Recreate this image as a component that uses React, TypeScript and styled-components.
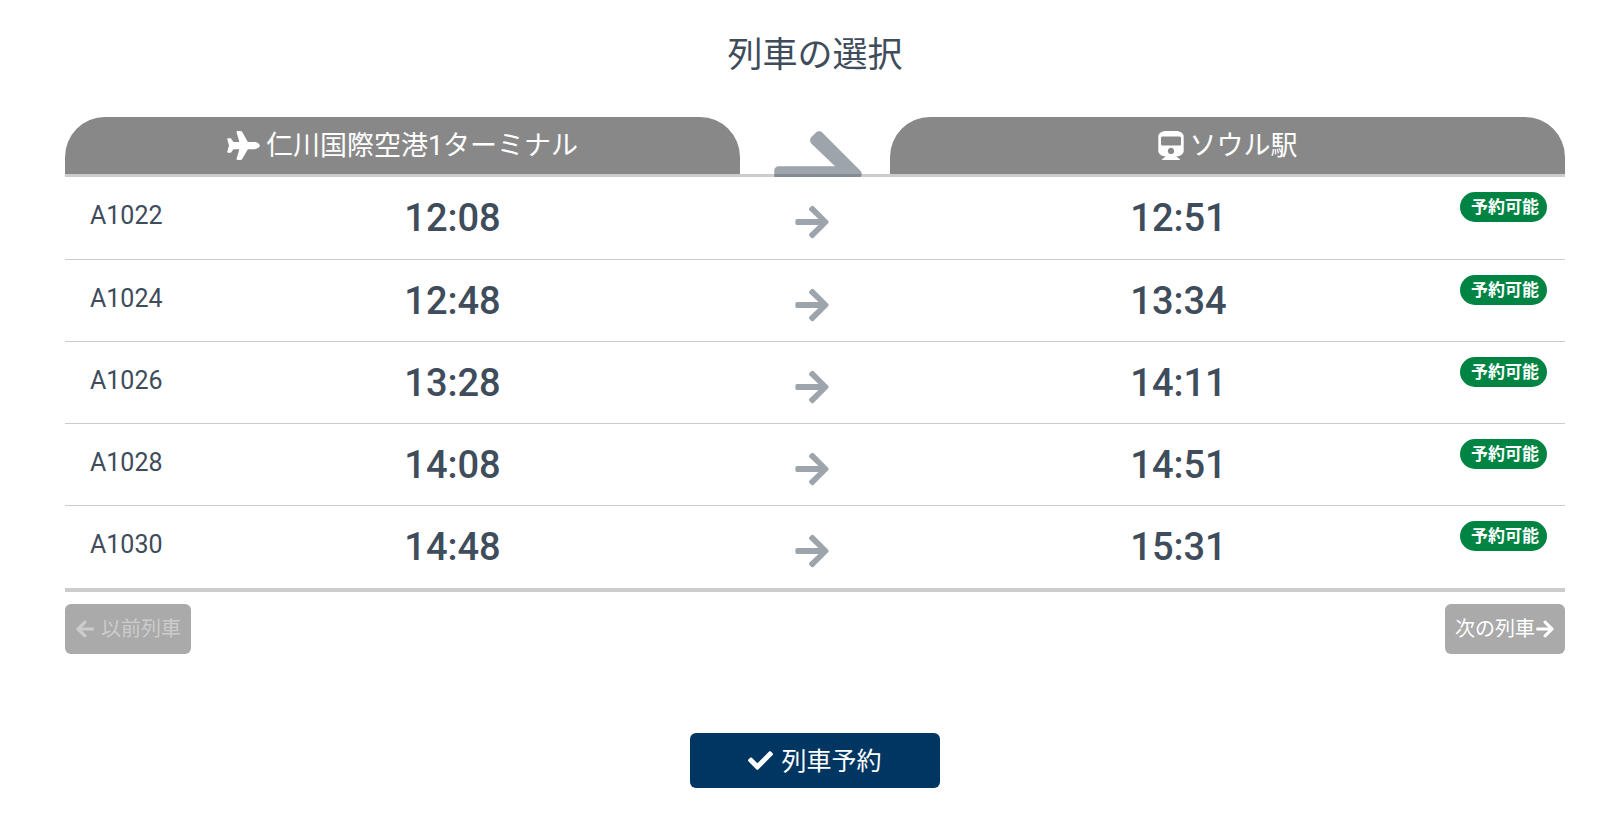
import React from 'react';
import styled, { createGlobalStyle } from 'styled-components';
import { FaArrowLeft, FaArrowRight, FaCheck, FaTrain } from 'react-icons/fa';
import { FaPlane } from 'react-icons/fa6';

const GlobalStyle = createGlobalStyle`
  *, *::before, *::after { box-sizing: border-box; }
  body {
    margin: 0;
    background: #fff;
    color: #3e4c5b;
    font-family: Roboto, 'Noto Sans CJK JP', sans-serif;
  }
  button { font: inherit; }
`;

const Page = styled.main`
  display: flex;
  flex-direction: column;
  padding: 30px 50px 24px 65px;
`;

const Title = styled.h1`
  margin: 0 0 35px;
  font-size: 35px;
  line-height: 52px;
  font-weight: 400;
  text-align: center;
`;

const Timetable = styled.table`
  width: 100%;
  padding-bottom: 1px;
  table-layout: fixed;
  border-collapse: separate;
  border-spacing: 0;
  border-bottom: 4px solid #ccc;
`;

const EdgeCol = styled.col`width: 106px;`;
const ArrowCol = styled.col`width: 10%;`;

const HeadCell = styled.th`
  position: relative;
  padding: 0;
  border-bottom: 3px solid #ccc;
  font-weight: 400;
`;

const Station = styled.div<{ $icon: number }>`
  display: flex;
  align-items: center;
  justify-content: center;
  gap: 6px;
  height: 57px;
  border-radius: 40px 40px 0 0;
  background: #888;
  color: #fff;
  font-size: 27px;
  line-height: 40px;
  svg {
    flex: none;
    width: ${p => p.$icon}px;
    height: 29px;
  }
`;

const Direction = styled.div`
  position: absolute;
  inset: 0 0 -3px;
  overflow: hidden;
  padding: 7px 0 0 6px;
  opacity: 0.5;
  svg { display: block; margin: 0 auto; font-size: 100px; }
`;

const Cell = styled.td`
  height: 82px;
  padding: 0;
  vertical-align: top;
  tr + tr > & { border-top: 1px solid #ccc; }
`;

const Code = styled(Cell)`
  padding: 24px 0 0 25px;
  font-size: 25px;
  line-height: 30px;
`;

const Time = styled(Cell)<{ $side: 'left' | 'right' }>`
  padding: 19px ${p => (p.$side === 'left' ? '6px 0 0' : '0 0 8px')};
  font-size: 38px;
  line-height: 44px;
  font-weight: 500;
  text-align: center;
`;

const Arrow = styled(Cell)`
  padding: 26px 6px 0 0;
  svg { display: block; margin: 0 auto; font-size: 38px; opacity: 0.5; }
`;

const Status = styled(Cell)`
  padding: 15px 18px 0 0;
  text-align: right;
`;

const Badge = styled.span`
  display: inline-block;
  padding: 0 8px 0 11px;
  border-radius: 15px;
  background: #008444;
  color: #fff;
  font-size: 17px;
  line-height: 30px;
  font-weight: 700;
  white-space: nowrap;
`;

const Pager = styled.nav`
  display: flex;
  justify-content: space-between;
  margin-top: 12px;
`;

const ButtonLabel = styled.span`
  padding-bottom: 3px;
`;

const PagerButton = styled.button<{ $gap?: number }>`
  display: flex;
  align-items: center;
  gap: ${p => p.$gap ?? 0}px;
  height: 50px;
  padding: 0 10px;
  border: 0;
  border-radius: 6px;
  background: #aaa;
  color: #fff;
  font-size: 20px;
  &:disabled { color: #ccc; }
`;

const Reserve = styled.button`
  display: flex;
  align-items: center;
  justify-content: center;
  gap: 8px;
  align-self: center;
  width: 250px;
  height: 55px;
  margin-top: 79px;
  border: 0;
  border-radius: 6px;
  background: #003661;
  color: #fff;
  font-size: 25px;
`;

const trains = [
  { code: 'A1022', departs: '12:08', arrives: '12:51' },
  { code: 'A1024', departs: '12:48', arrives: '13:34' },
  { code: 'A1026', departs: '13:28', arrives: '14:11' },
  { code: 'A1028', departs: '14:08', arrives: '14:51' },
  { code: 'A1030', departs: '14:48', arrives: '15:31' },
];

export default function App() {
  return (
    <>
      <GlobalStyle />
      <Page>
        <Title>列車の選択</Title>
        <Timetable>
          <colgroup>
            <EdgeCol />
            <col />
            <ArrowCol />
            <col />
            <EdgeCol />
          </colgroup>
          <thead>
            <tr>
              <HeadCell colSpan={2}><Station $icon={33}><FaPlane />仁川国際空港1ターミナル</Station></HeadCell>
              <HeadCell><Direction><FaArrowRight /></Direction></HeadCell>
              <HeadCell colSpan={2}><Station $icon={26}><FaTrain />ソウル駅</Station></HeadCell>
            </tr>
          </thead>
          <tbody>
            {trains.map(t => (
              <tr key={t.code}>
                <Code>{t.code}</Code>
                <Time $side="left">{t.departs}</Time>
                <Arrow><FaArrowRight /></Arrow>
                <Time $side="right">{t.arrives}</Time>
                <Status><Badge>予約可能</Badge></Status>
              </tr>
            ))}
          </tbody>
        </Timetable>
        <Pager>
          <PagerButton type="button" $gap={6} disabled>
            <FaArrowLeft />
            <ButtonLabel>以前列車</ButtonLabel>
          </PagerButton>
          <PagerButton type="button">
            <ButtonLabel>次の列車</ButtonLabel>
            <FaArrowRight />
          </PagerButton>
        </Pager>
        <Reserve type="button">
          <FaCheck />
          <ButtonLabel>列車予約</ButtonLabel>
        </Reserve>
      </Page>
    </>
  );
}
